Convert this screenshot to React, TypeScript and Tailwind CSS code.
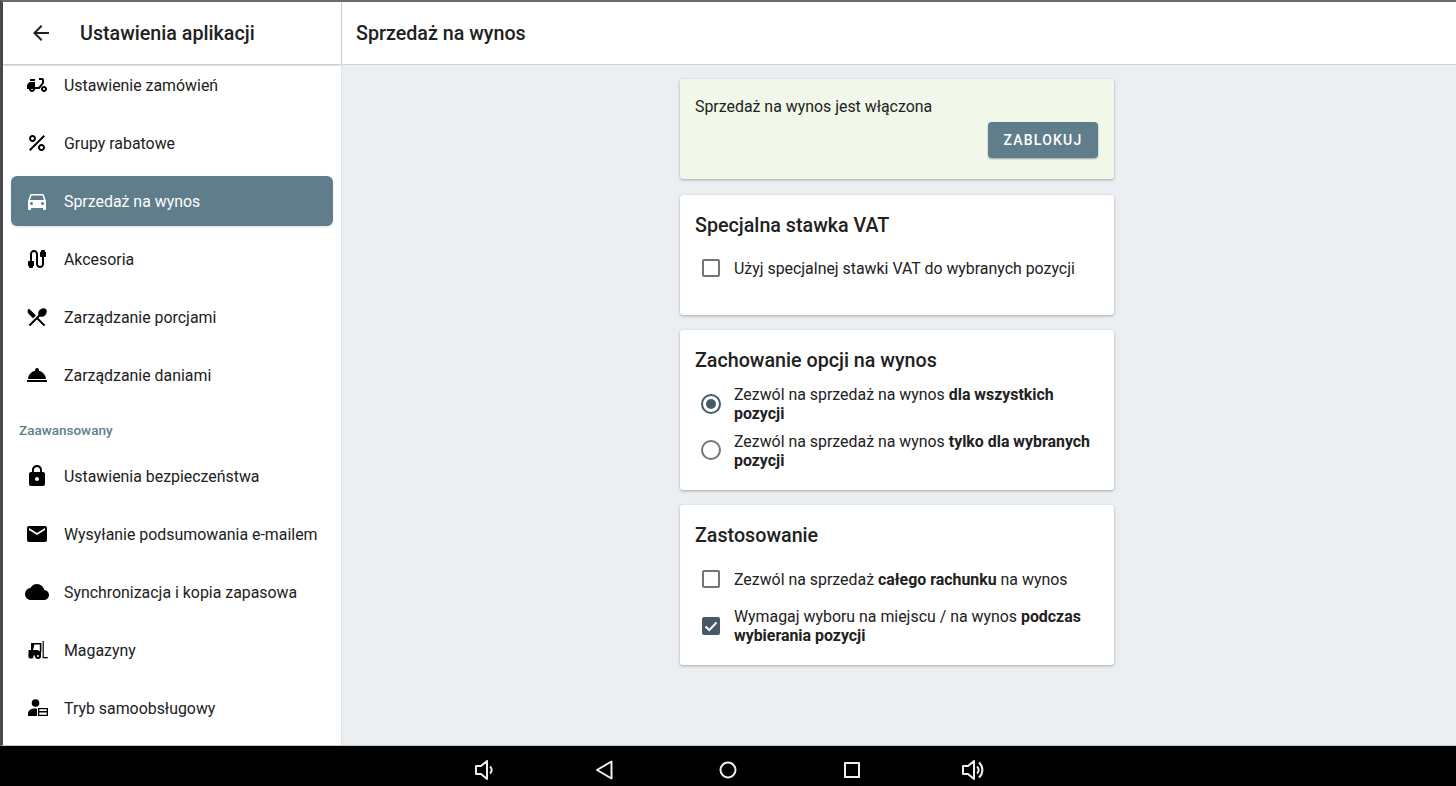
import type { ReactNode } from 'react';
import {
  MdArrowBack,
  MdCable,
  MdCloud,
  MdDeliveryDining,
  MdDirectionsCar,
  MdEmail,
  MdLock,
  MdPercent,
  MdRestaurantMenu,
  MdRoomService,
} from 'react-icons/md';

function ForkliftIcon() {
  return (
    <svg viewBox="0 0 24 24" className="w-6 h-6" fill="currentColor">
      <path d="M6 5h10.4v9h-1.6V6.6H9.4L8 12H6z" />
      <path d="M3.5 12h9l3.5 2v3.5H3.5z" />
      <circle cx="6" cy="18" r="2.6" />
      <circle cx="13" cy="18" r="3" />
      <circle cx="13" cy="18" r="1" fill="#fff" />
      <path d="M17.6 3h1.2v16h4v1.2h-5.2z" />
    </svg>
  );
}

function SelfServiceIcon() {
  return (
    <svg viewBox="0 0 24 24" className="w-6 h-6" fill="currentColor">
      <circle cx="10.5" cy="7" r="3.8" />
      <path d="M3 20v-2.5C3 14.5 6 12.4 9.5 12.4c.9 0 1.7.1 2.5.4V20z" />
      <path fillRule="evenodd" d="M13 12h10v8H13zM14.3 15h7.4v-1.7h-7.4zm0 3.7h7.4v-2.2h-7.4z" />
    </svg>
  );
}

function Row({ icon, label, active }: { icon: ReactNode; label: string; active?: boolean }) {
  if (active) {
    return (
      <div className="h-[50px] shrink-0 mx-2 my-1 flex items-center pl-[14px] bg-[#607d8b] rounded-md text-white shadow-sm">
        <span className="w-[39px] flex">{icon}</span>
        <span className="text-[15.9px] pt-[2px]">{label}</span>
      </div>
    );
  }
  return (
    <div className="h-[58px] shrink-0 flex items-center pl-[22px] text-[#212121]">
      <span className="w-[39px] flex text-black">{icon}</span>
      <span className="text-[15.9px] pt-[2px]">{label}</span>
    </div>
  );
}

function Card({ title, children, className }: { title: string; children: ReactNode; className: string }) {
  return (
    <div className={`bg-white rounded-[3px] shadow-[0_1px_3px_rgba(0,0,0,0.3)] px-[15px] ${className}`}>
      <h2 className="h-[60px] flex items-center pt-[2px] text-[19.7px] font-medium text-[#212121]">{title}</h2>
      {children}
    </div>
  );
}

function Option({ control, children, className, textClass }: { control: ReactNode; children: ReactNode; className: string; textClass?: string }) {
  return (
    <div className={`flex items-center ${className}`}>
      <span className="w-[32px] mr-[7px] flex justify-center shrink-0">{control}</span>
      <span className={`text-[15.9px] leading-[19px] text-[#212121] ${textClass ?? ''}`}>{children}</span>
    </div>
  );
}

function Checkbox({ checked }: { checked?: boolean }) {
  if (checked) {
    return (
      <span className="w-[18px] h-[18px] rounded-[2px] bg-[#455a64] flex items-center justify-center">
        <svg viewBox="0 0 18 18" className="w-[18px] h-[18px]" fill="none" stroke="#fff" strokeWidth="2">
          <path d="M3.5 9.5l3.8 3.6 7.2-7.6" />
        </svg>
      </span>
    );
  }
  return <span className="w-[18px] h-[18px] rounded-[2px] border-2 border-[#757575]" />;
}

function Radio({ checked }: { checked?: boolean }) {
  return (
    <span className={`w-5 h-5 rounded-full border-2 flex items-center justify-center ${checked ? 'border-[#455a64]' : 'border-[#757575]'}`}>
      {checked && <span className="w-[10px] h-[10px] rounded-full bg-[#455a64]" />}
    </span>
  );
}

export default function App() {
  return (
    <div className="h-[786px] overflow-hidden flex flex-col bg-black font-['Roboto',sans-serif]">
      <div className="h-[746px] flex bg-[#eceff1] border-t-2 border-l-[3px] border-b border-t-[#6b6b6b] border-l-[#4a4a4a] border-b-[#c8c8c8]">
        <aside className="w-[339px] shrink-0 bg-white border-r border-[#dfe2e4] flex flex-col">
          <header className="h-[62px] shrink-0 flex items-center pl-[26px] bg-white relative z-10 shadow-[0_1px_2px_rgba(0,0,0,0.3)]">
            <MdArrowBack className="w-6 h-6 text-[#212121] mr-[27px]" />
            <h1 className="text-[19.7px] font-medium text-[#212121] pt-[2px]">Ustawienia aplikacji</h1>
          </header>
          <div className="flex-1 overflow-hidden flex flex-col -mt-[8px]">
            <Row icon={<MdDeliveryDining className="w-6 h-6" />} label="Ustawienie zamówień" />
            <Row icon={<MdPercent className="w-6 h-6" />} label="Grupy rabatowe" />
            <Row active icon={<MdDirectionsCar className="w-6 h-6" />} label="Sprzedaż na wynos" />
            <Row icon={<MdCable className="w-6 h-6" />} label="Akcesoria" />
            <Row icon={<MdRestaurantMenu className="w-6 h-6" />} label="Zarządzanie porcjami" />
            <Row icon={<MdRoomService className="w-6 h-6" />} label="Zarządzanie daniami" />
            <div className="h-[43px] shrink-0 flex items-center pl-4 pt-[9px] text-[13.5px] font-medium text-[#607d8b]">Zaawansowany</div>
            <Row icon={<MdLock className="w-6 h-6" />} label="Ustawienia bezpieczeństwa" />
            <Row icon={<MdEmail className="w-6 h-6" />} label="Wysyłanie podsumowania e-mailem" />
            <Row icon={<MdCloud className="w-6 h-6" />} label="Synchronizacja i kopia zapasowa" />
            <Row icon={<ForkliftIcon />} label="Magazyny" />
            <Row icon={<SelfServiceIcon />} label="Tryb samoobsługowy" />
          </div>
        </aside>

        <main className="flex-1 flex flex-col min-w-0">
          <header className="h-[63px] shrink-0 bg-white border-b border-[#cfd3d6] flex items-center pl-[14px]">
            <h1 className="text-[19.7px] font-medium text-[#212121] pt-[2px]">Sprzedaż na wynos</h1>
          </header>
          <div className="flex-1 flex flex-col items-center gap-[15px] pt-[14px] pr-1">
            <div className="w-[434px] h-[100px] mb-px bg-[#f1f8e9] rounded-[3px] shadow-[0_1px_3px_rgba(0,0,0,0.3)] px-[15px] pt-[18px]">
              <p className="text-[15.9px] leading-[20px] text-[#212121]">Sprzedaż na wynos jest włączona</p>
              <div className="flex justify-end mt-[5px] mr-px">
                <button className="w-[110px] h-[36px] bg-[#607d8b] text-white text-[14px] font-medium tracking-[1.2px] rounded shadow-[0_1px_2px_rgba(0,0,0,0.35)]">
                  ZABLOKUJ
                </button>
              </div>
            </div>

            <Card title="Specjalna stawka VAT" className="w-[434px] h-[120px]">
              <Option control={<Checkbox />} className="h-[26px]">
                Użyj specjalnej stawki VAT do wybranych pozycji
              </Option>
            </Card>

            <Card title="Zachowanie opcji na wynos" className="w-[434px] h-[160px]">
              <div className="-mt-[9px]">
                <Option control={<Radio checked />} className="h-[46px]">
                  Zezwól na sprzedaż na wynos <b className="font-bold">dla wszystkich pozycji</b>
                </Option>
                <Option control={<Radio />} className="h-[46px]" textClass="pt-[2px]">
                  Zezwól na sprzedaż na wynos <b className="font-bold">tylko dla wybranych pozycji</b>
                </Option>
              </div>
            </Card>

            <Card title="Zastosowanie" className="w-[434px] h-[160px]">
              <Option control={<Checkbox />} className="h-[28px]">
                Zezwól na sprzedaż <b className="font-bold">całego rachunku</b> na wynos
              </Option>
              <Option control={<Checkbox checked />} className="h-[46px] mt-[10px]">
                Wymagaj wyboru na miejscu / na wynos <b className="font-bold">podczas wybierania pozycji</b>
              </Option>
            </Card>
          </div>
        </main>
      </div>

      <nav className="h-[40px] shrink-0 bg-black flex items-center justify-center pt-2 text-[#f0f0f0]">
        <svg viewBox="0 0 24 24" className="w-6 h-6 mr-[96px]" fill="none" stroke="currentColor" strokeWidth="2" strokeLinejoin="round">
          <path d="M4 8h5l6-5v18l-6-5H4z" />
          <path d="M18 8.5a4.5 4.5 0 0 1 0 7" />
        </svg>
        <svg viewBox="0 0 24 24" className="w-6 h-6 mr-[100px]" fill="none" stroke="currentColor" strokeWidth="2" strokeLinejoin="round">
          <path d="M19.5 3.5v17L5 12z" />
        </svg>
        <svg viewBox="0 0 24 24" className="w-6 h-6 mr-[100px]" fill="none" stroke="currentColor" strokeWidth="2">
          <circle cx="12" cy="12" r="7.5" />
        </svg>
        <svg viewBox="0 0 24 24" className="w-6 h-6 mr-[96px]" fill="none" stroke="currentColor" strokeWidth="2" strokeLinejoin="round">
          <rect x="5" y="5" width="14" height="14" />
        </svg>
        <svg viewBox="0 0 24 24" className="w-6 h-6 overflow-visible" fill="none" stroke="currentColor" strokeWidth="2" strokeLinejoin="round">
          <path d="M3 8h5l6-5v18l-6-5H3z" />
          <path d="M17 8.5a4.5 4.5 0 0 1 0 7" />
          <path d="M19 4.5a10 10 0 0 1 0 15" />
        </svg>
      </nav>
    </div>
  );
}
